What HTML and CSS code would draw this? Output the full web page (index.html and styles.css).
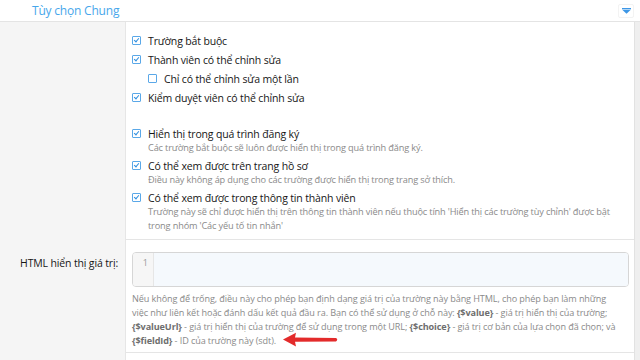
FILE: index.html
```html
<!DOCTYPE html>
<html lang="vi">
<head>
<meta charset="utf-8">
<title>Tùy chọn Chung</title>
<link rel="stylesheet" href="styles.css">
</head>
<body>
<div class="page">
  <div class="block-header">
    <span class="block-title">Tùy chọn Chung</span>
    <span class="toggle">
      <svg width="9" height="6" viewBox="0 0 9 6"><rect x="0" y="0" width="9" height="1.4" fill="#3d97e6"/><path d="M0.5 2 H8.5 L4.5 5.8 Z" fill="#3d97e6"/></svg>
    </span>
  </div>
  <div class="form">
    <div class="row">
      <div class="dt"></div>
      <div class="dd dd-options">
        <ul class="checks">
          <li class="check"><span class="cb on"></span><span class="lbl">Trường bắt buộc</span></li>
          <li class="check"><span class="cb on"></span><span class="lbl">Thành viên có thể chỉnh sửa</span></li>
          <li class="check sub"><span class="cb"></span><span class="lbl">Chỉ có thể chỉnh sửa một lần</span></li>
          <li class="check"><span class="cb on"></span><span class="lbl">Kiểm duyệt viên có thể chỉnh sửa</span></li>
          <li class="sep"></li>
          <li class="check"><span class="cb on"></span><div><div class="lbl">Hiển thị trong quá trình đăng ký</div><div class="desc">Các trường bắt buộc sẽ luôn được hiển thị trong quá trình đăng ký.</div></div></li>
          <li class="check"><span class="cb on"></span><div><div class="lbl">Có thể xem được trên trang hồ sơ</div><div class="desc">Điều này không áp dụng cho các trường được hiển thị trong trang sở thích.</div></div></li>
          <li class="check last"><span class="cb on"></span><div><div class="lbl">Có thể xem được trong thông tin thành viên</div><div class="desc">Trường này sẽ chỉ được hiển thị trên thông tin thành viên nếu thuộc tính 'Hiển thị các trường tùy chỉnh' được bật<br>trong nhóm 'Các yếu tố tin nhắn'</div></div></li>
        </ul>
      </div>
    </div>
    <div class="row">
      <div class="dt"><span class="label">HTML hiển thị giá trị:</span></div>
      <div class="dd dd-html">
        <div class="editor">
          <div class="gutter">1</div>
          <div class="code"></div>
        </div>
        <div class="help">Nếu không để trống, điều này cho phép bạn định dạng giá trị của trường này bằng HTML, cho phép bạn làm những<br>việc như liên kết hoặc đánh dấu kết quả đầu ra. Bạn có thể sử dụng ở chỗ này: <b>{$value}</b> - giá trị hiển thị của trường;<br><b>{$valueUrl}</b> - giá trị hiển thị của trường để sử dụng trong một URL; <b>{$choice}</b> - giá trị cơ bản của lựa chọn đã chọn; và<br><b>{$fieldId}</b> - ID của trường này (sdt).</div>
        <svg class="arrow" width="58" height="18" viewBox="0 0 58 18">
          <path d="M2 8.5 L15 1.8 L14 6.4 L55 7 Q57.5 8.6 55 10.6 L14 10.8 L15 15.4 Z" fill="#e32b2b"/>
        </svg>
      </div>
    </div>
    <div class="row row-fill">
      <div class="dt"></div>
      <div class="dd"></div>
    </div>
  </div>
</div>
</body>
</html>
```
FILE: styles.css
```css
html, body {
  margin: 0;
  padding: 0;
  background: #ffffff;
}
body {
  font-family: "Open Sans", "Noto Sans", sans-serif;
  color: #1d1d1d;
  width: 640px;
  height: 360px;
  overflow: hidden;
}
.page {
  display: flex;
  flex-direction: column;
  height: 360px;
}
.block-header {
  flex: none;
  height: 21px;
  border-bottom: 1px solid #e4e4e4;
  display: flex;
  align-items: center;
  justify-content: space-between;
  padding: 0 6px 0 32px;
}
.block-title {
  font-size: 12px;
  letter-spacing: -0.2px;
  color: #47a7eb;
  line-height: 18px;
}
.toggle {
  width: 14px;
  height: 12px;
  border: 1px solid #f3f3f3;
  border-radius: 2px;
  display: flex;
  align-items: center;
  justify-content: center;
}
.form {
  flex: 1;
  display: flex;
  flex-direction: column;
  background: #efefef;
  padding-right: 5px;
}
.row {
  flex: none;
  display: flex;
  background: #fff;
  border-right: 1px solid #e2e2e2;
}
.row-fill {
  flex: 1;
}
.dt {
  width: 126px;
  flex: none;
  background: #f5f5f5;
  border-right: 1px solid #e6e6e6;
  text-align: right;
  box-sizing: border-box;
  padding-right: 7px;
}
.dd {
  flex: 1;
  padding: 0 5px 0 6px;
  position: relative;
}
.row + .row .dd {
  border-top: 1px solid #e5e5e5;
}
.dd-options {
  padding-top: 11px;
  padding-bottom: 6px;
}
.checks {
  list-style: none;
  margin: 0;
  padding: 0;
}
.check {
  display: flex;
  align-items: flex-start;
  margin-bottom: 3px;
}
.check.last {
  margin-bottom: 0;
}
.check.sub {
  padding-left: 16px;
}
.sep {
  height: 17px;
}
.cb {
  width: 9px;
  height: 9px;
  border: 1px solid #5aa8e8;
  border-radius: 1px;
  box-sizing: border-box;
  flex: none;
  margin: 2.5px 7px 0 0;
  position: relative;
  background: #fff;
}
.cb.on::after {
  content: "";
  position: absolute;
  left: 2px;
  top: 0px;
  width: 2px;
  height: 4px;
  border: solid #2f8fe0;
  border-width: 0 1.4px 1.4px 0;
  transform: rotate(40deg);
}
.lbl {
  font-size: 10.5px;
  letter-spacing: -0.15px;
  line-height: 16px;
  color: #161616;
  white-space: nowrap;
}
.desc {
  margin-top: -1px;
  font-size: 9.2px;
  letter-spacing: -0.15px;
  line-height: 14px;
  color: #8a8a8a;
  white-space: nowrap;
}
.label {
  display: block;
  font-size: 10.5px;
  letter-spacing: -0.15px;
  line-height: 16px;
  padding-top: 16px;
  color: #161616;
}
.dd-html {
  padding-top: 12px;
  padding-bottom: 4px;
}
.editor {
  display: flex;
  height: 35px;
  border: 1px solid #d6d6d6;
  border-radius: 4px;
  overflow: hidden;
  box-sizing: border-box;
}
.gutter {
  width: 21px;
  background: #f6f6f6;
  border-right: 1px solid #e6e6e6;
  font-family: "Open Sans", sans-serif;
  font-size: 9px;
  color: #999;
  text-align: right;
  padding: 3px 5px 0 0;
  box-sizing: border-box;
}
.code {
  flex: 1;
  background: #f5f9fd;
}
.help {
  margin-top: 5px;
  font-size: 9.1px;
  letter-spacing: -0.1px;
  line-height: 14px;
  color: #8a8a8a;
  white-space: nowrap;
}
.help b {
  color: #6e6e6e;
  font-weight: 700;
}
.arrow {
  position: absolute;
  left: 155px;
  top: 91px;
}
```
